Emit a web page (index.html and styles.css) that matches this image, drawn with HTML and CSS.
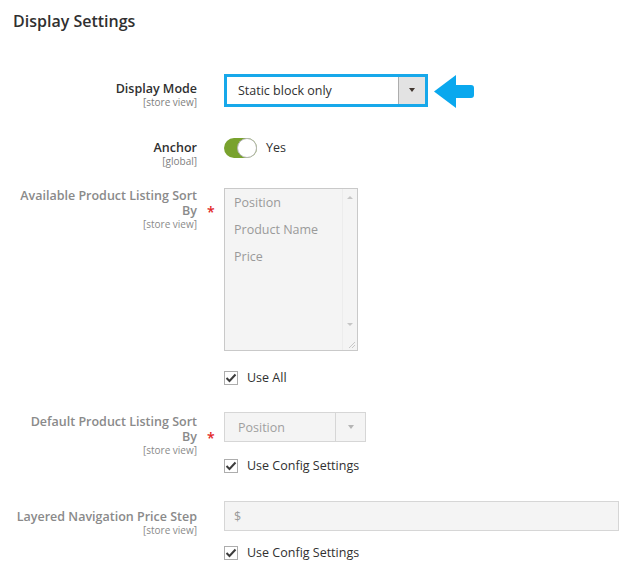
FILE: index.html
```html
<!DOCTYPE html>
<html>
<head>
<meta charset="utf-8">
<link rel="stylesheet" href="styles.css">
</head>
<body>
<div class="page">
  <h2 class="title">Display Settings</h2>

  <div class="field row-mode">
    <div class="label"><span class="name">Display Mode</span><span class="scope">[store view]</span></div>
    <div class="req"></div>
    <div class="control mode-control">
      <div class="select active">
        <span class="select-text">Static block only</span>
        <span class="select-btn"><span class="caret"></span></span>
      </div>
      <svg class="pointer" width="40" height="33" viewBox="0 0 40 33">
        <path d="M0 16.5 L22 0 L22 10 L37 10 Q40 10 40 13 L40 20 Q40 23 37 23 L22 23 L22 33 Z" fill="#0aa8ee"/>
      </svg>
    </div>
  </div>

  <div class="field row-anchor">
    <div class="label"><span class="name">Anchor</span><span class="scope">[global]</span></div>
    <div class="req"></div>
    <div class="control toggle-control">
      <span class="toggle"><span class="knob"></span></span>
      <span class="toggle-text">Yes</span>
    </div>
  </div>

  <div class="field row-avail">
    <div class="label muted"><span class="name">Available Product Listing Sort By</span><span class="scope">[store view]</span></div>
    <div class="req"><span class="star">*</span></div>
    <div class="control">
      <div class="multiselect">
        <div class="options">
          <div class="opt">Position</div>
          <div class="opt">Product Name</div>
          <div class="opt">Price</div>
        </div>
        <div class="scrollbar">
          <span class="sb-up"></span>
          <span class="sb-down"></span>
          <span class="grip"></span>
        </div>
      </div>
      <label class="check check-useall"><span class="box"><svg width="12" height="10" viewBox="0 0 12 10"><path d="M1.5 5 L4.5 8 L10.5 1.5" fill="none" stroke="#3d3d3d" stroke-width="2"/></svg></span><span class="check-text">Use All</span></label>
    </div>
  </div>

  <div class="field row-default">
    <div class="label muted"><span class="name">Default Product Listing Sort By</span><span class="scope">[store view]</span></div>
    <div class="req"><span class="star">*</span></div>
    <div class="control">
      <div class="select disabled">
        <span class="select-text">Position</span>
        <span class="select-btn"><span class="caret"></span></span>
      </div>
      <label class="check check-config"><span class="box"><svg width="12" height="10" viewBox="0 0 12 10"><path d="M1.5 5 L4.5 8 L10.5 1.5" fill="none" stroke="#3d3d3d" stroke-width="2"/></svg></span><span class="check-text">Use Config Settings</span></label>
    </div>
  </div>

  <div class="field row-step">
    <div class="label muted"><span class="name">Layered Navigation Price Step</span><span class="scope">[store view]</span></div>
    <div class="req"></div>
    <div class="control">
      <div class="input disabled"><span class="input-text">$</span></div>
      <label class="check check-step"><span class="box"><svg width="12" height="10" viewBox="0 0 12 10"><path d="M1.5 5 L4.5 8 L10.5 1.5" fill="none" stroke="#3d3d3d" stroke-width="2"/></svg></span><span class="check-text">Use Config Settings</span></label>
    </div>
  </div>
</div>
</body>
</html>
```

FILE: styles.css
```css
* { box-sizing: border-box; }
html, body { margin: 0; padding: 0; background: #fff; }
body {
  font-family: "Open Sans", "Noto Sans", "Liberation Sans", sans-serif;
  color: #303030;
  width: 631px;
  height: 575px;
  overflow: hidden;
}
.page { padding: 0 0 0 13px; }

.title {
  margin: 0;
  padding-top: 10px;
  font-size: 16px;
  font-weight: 600;
  color: #303030;
  line-height: 23px;
  height: 72px;
}

.field {
  display: grid;
  grid-template-columns: 184px 27px 1fr;
  align-items: start;
}
.label {
  text-align: right;
  display: flex;
  flex-direction: column;
  align-items: flex-end;
}
.label .name {
  font-size: 12.5px;
  font-weight: 600;
  line-height: 15px;
  color: #303030;
  max-width: 182px;
}
.label .scope {
  font-size: 10px;
  line-height: 13px;
  color: #808080;
}
.label.muted .name { color: #8a8a8a; }
.label.muted .scope { color: #8a8a8a; }

.star {
  display: block;
  color: #e22626;
  font-size: 14px;
  font-weight: 600;
  line-height: 15px;
  text-align: left;
  padding-left: 10px;
}

.row-mode .label { padding-top: 9px; }
.mode-control { display: flex; align-items: center; gap: 6px; }
.select {
  display: flex;
  align-items: stretch;
  height: 33px;
  border: 1px solid #adadad;
  background: #fff;
}
.select.active {
  width: 204px;
  border: 3px solid #17a8ea;
}
.select-text {
  flex: 1;
  font-size: 12.5px;
  padding-left: 11px;
  display: flex;
  align-items: center;
  color: #303030;
}
.select-btn {
  width: 27px;
  background: #e3e3e3;
  border-left: 1px solid #adadad;
  display: flex;
  align-items: center;
  justify-content: center;
}
.caret {
  width: 0; height: 0;
  border-left: 3.5px solid transparent;
  border-right: 3.5px solid transparent;
  border-top: 4px solid #41362f;
}
.pointer { display: block; margin-top: 3px; }

.row-anchor { margin-top: 29px; }
.row-anchor .label { padding-top: 2px; }
.toggle-control { display: flex; align-items: flex-start; gap: 9px; }
.toggle {
  width: 33px; height: 20px;
  border-radius: 10px;
  background: #79a22e;
  position: relative;
  display: block;
}
.knob {
  position: absolute;
  right: 0; top: 0;
  width: 20px; height: 20px;
  border-radius: 50%;
  background: #fff;
  border: 1px solid #b5b5b5;
}
.toggle-text { font-size: 12.5px; line-height: 20px; }

.row-avail { margin-top: 20px; }
.row-avail .star { padding-top: 16px; }
.multiselect {
  width: 134px;
  height: 163px;
  border: 1px solid #c9c9c9;
  background: #f4f4f4;
  display: flex;
}
.options { flex: 1; padding: 0 0 0 9px; }
.opt { font-size: 12.5px; color: #9a9a9a; line-height: 27px; }
.scrollbar {
  width: 15px;
  border-left: 1px solid #ececec;
  position: relative;
}
.sb-up, .sb-down {
  position: absolute; left: 4px;
  width: 0; height: 0;
  border-left: 3px solid transparent;
  border-right: 3px solid transparent;
}
.sb-up { top: 7px; border-bottom: 3px solid #c6c6c6; }
.sb-down { bottom: 24px; border-top: 3px solid #c6c6c6; }
.grip {
  position: absolute; right: 2px; bottom: 2px;
  width: 6px; height: 6px;
  background: linear-gradient(135deg, transparent 45%, #c8c8c8 45%, #c8c8c8 55%, transparent 55%, transparent 70%, #c8c8c8 70%, #c8c8c8 80%, transparent 80%);
}

.check {
  display: flex;
  align-items: center;
  gap: 9px;
  height: 18px;
  font-size: 12.5px;
  color: #303030;
}
.check-text { line-height: 18px; }
.box {
  width: 14px; height: 14px;
  border: 1px solid #adadad;
  background: #fff;
  display: flex;
  align-items: center;
  justify-content: center;
}
.check-useall { margin-top: 18px; }

.row-default { margin-top: 25px; }
.row-default .label { padding-top: 2px; }
.row-default .star { padding-top: 18px; }
.select.disabled {
  width: 142px;
  height: 30px;
  border: 1px solid #d6d6d6;
  background: #f4f4f4;
}
.select.disabled .select-text { color: #a0a0a0; padding-left: 13px; }
.select.disabled .select-btn { background: #f4f4f4; border-left: 1px solid #d6d6d6; width: 30px; }
.select.disabled .caret { border-top-color: #b5b5b5; }
.check-config { margin-top: 15px; }

.row-step { margin-top: 26px; }
.row-step .label { padding-top: 8px; }
.input {
  width: 395px;
  height: 30px;
  border: 1px solid #d6d6d6;
  background: #f4f4f4;
  display: flex;
  align-items: center;
}
.input-text { font-size: 12.5px; color: #9a9a9a; padding-left: 9px; }
.check-step { margin-top: 13px; }
```
